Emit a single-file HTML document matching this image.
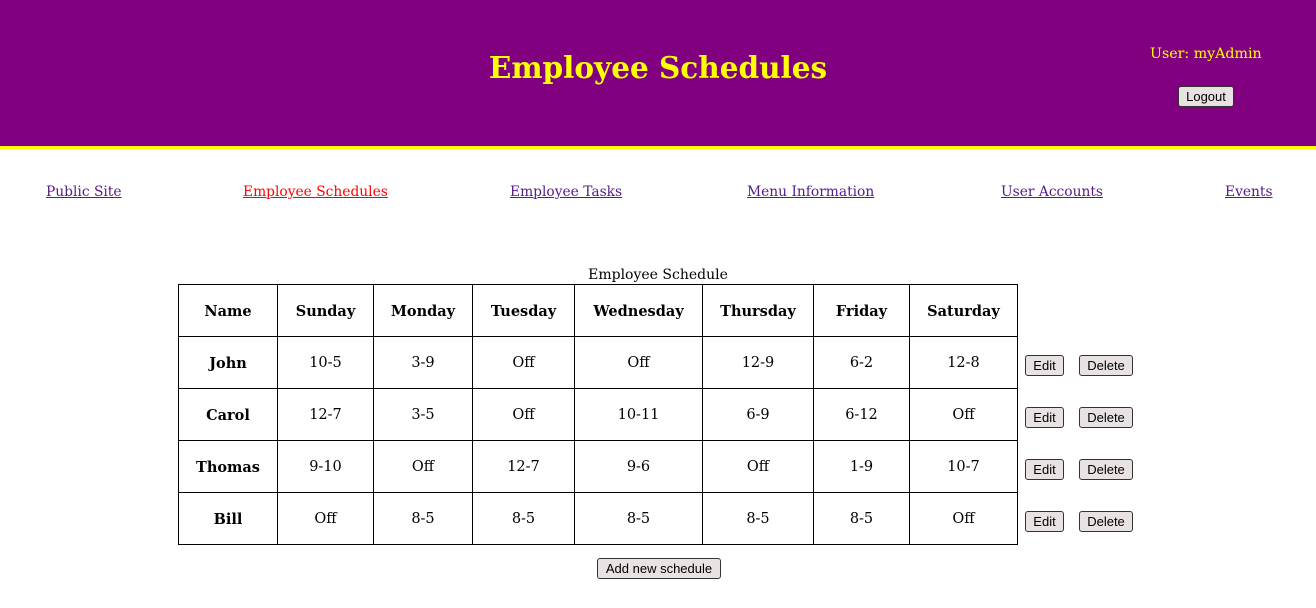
<!DOCTYPE html>
<html><head><meta charset="utf-8"><style>
body{margin:0;width:1316px;height:608px;background:#fff;font-family:Georgia,"DejaVu Serif","Liberation Serif",serif;position:relative;overflow:hidden}
.hdr{position:absolute;left:0;top:0;width:1316px;height:146px;background:#800080;border-bottom:3px solid #ff0;}
h1{position:absolute;left:0;width:1316px;top:48px;margin:0;text-align:center;color:#ff0;font-size:29.5px;font-weight:bold;line-height:40px}
.user{position:absolute;left:1150px;top:46px;color:#ff0;font-size:14.2px}
button{font-family:"Liberation Sans",Arial,sans-serif;font-size:13px;background:#e9e2e2;border:1px solid #333;border-radius:3px;padding:0;height:21px;position:absolute;color:#000}
.nav a{position:absolute;top:184px;font-size:13.8px;color:#551a8b;text-decoration:underline}
table{position:absolute;left:178px;top:284px;border-collapse:collapse;font-size:14.5px}
td,th{border:1px solid #000;height:50px;padding:1px 0 0 0;text-align:center;box-sizing:content-box}
.cap{position:absolute;left:0;width:1316px;text-align:center;top:267px;font-size:14px}
</style></head><body>
<div class="hdr"></div>
<h1>Employee Schedules</h1>
<div class="user">User: myAdmin</div>
<button style="left:1178px;top:86px;width:56px">Logout</button>
<div class="nav">
<a style="left:46px">Public Site</a>
<a style="left:243px;color:#f00">Employee Schedules</a>
<a style="left:510px">Employee Tasks</a>
<a style="left:747px">Menu Information</a>
<a style="left:1001px">User Accounts</a>
<a style="left:1225px">Events</a>
</div>
<div class="cap">Employee Schedule</div>
<table>
<tr><th style="width:98px">Name</th><th style="width:95px">Sunday</th><th style="width:98px">Monday</th><th style="width:101px">Tuesday</th><th style="width:127px">Wednesday</th><th style="width:110px">Thursday</th><th style="width:95px">Friday</th><th style="width:107px">Saturday</th></tr>
<tr><th>John</th><td>10-5</td><td>3-9</td><td>Off</td><td>Off</td><td>12-9</td><td>6-2</td><td>12-8</td></tr>
<tr><th>Carol</th><td>12-7</td><td>3-5</td><td>Off</td><td>10-11</td><td>6-9</td><td>6-12</td><td>Off</td></tr>
<tr><th>Thomas</th><td>9-10</td><td>Off</td><td>12-7</td><td>9-6</td><td>Off</td><td>1-9</td><td>10-7</td></tr>
<tr><th>Bill</th><td>Off</td><td>8-5</td><td>8-5</td><td>8-5</td><td>8-5</td><td>8-5</td><td>Off</td></tr>
</table>
<button style="left:1025px;top:355px;width:39px">Edit</button><button style="left:1079px;top:355px;width:54px">Delete</button>
<button style="left:1025px;top:407px;width:39px">Edit</button><button style="left:1079px;top:407px;width:54px">Delete</button>
<button style="left:1025px;top:459px;width:39px">Edit</button><button style="left:1079px;top:459px;width:54px">Delete</button>
<button style="left:1025px;top:511px;width:39px">Edit</button><button style="left:1079px;top:511px;width:54px">Delete</button>
<button style="left:597px;top:558px;width:124px">Add new schedule</button>
</body></html>
